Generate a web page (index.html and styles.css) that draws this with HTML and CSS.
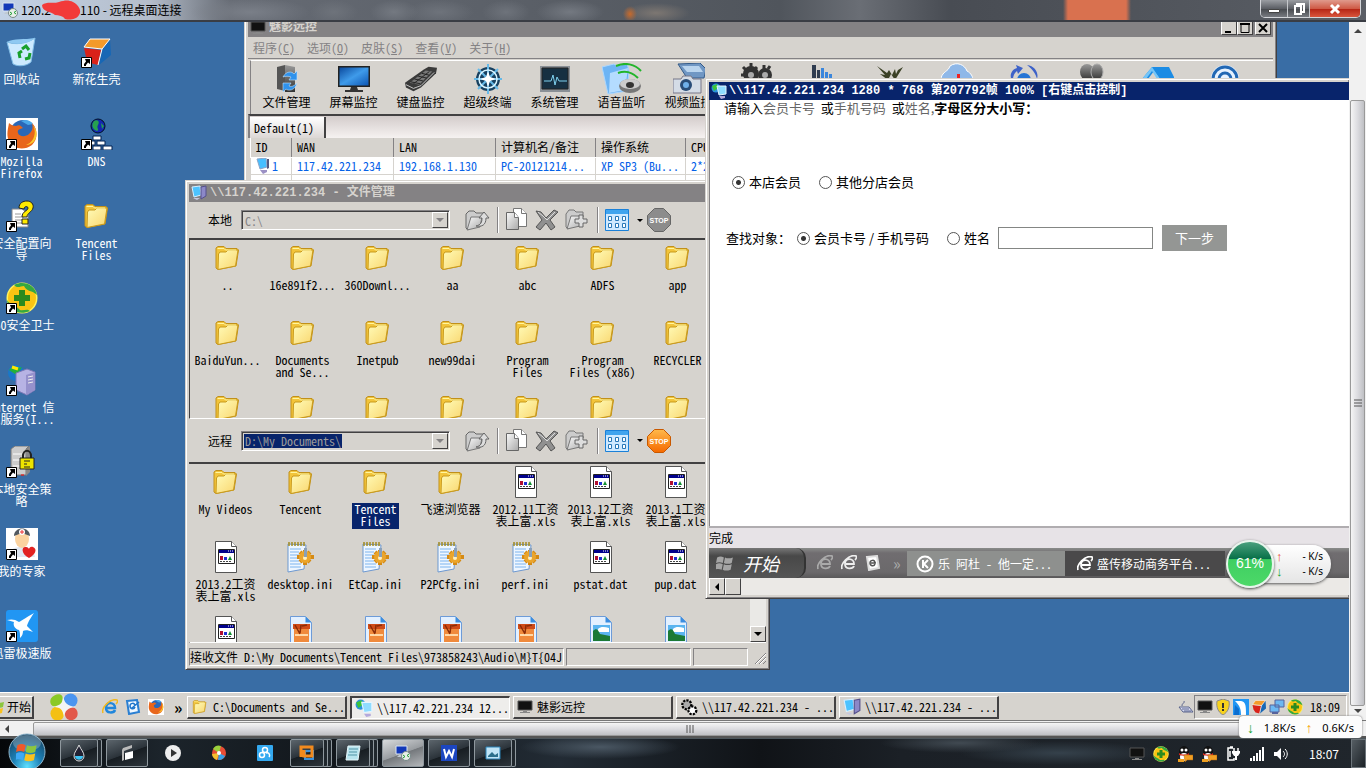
FILE: index.html
```html
<!DOCTYPE html>
<html lang="zh-CN">
<head>
<meta charset="utf-8">
<title>远程桌面连接</title>
<link rel="stylesheet" href="styles.css">
</head>
<body>
<svg class="sprite" width="0" height="0" aria-hidden="true">
  <defs>
    <linearGradient id="gFold" x1="0" y1="0" x2="1" y2="1"><stop offset="0" stop-color="#fffbb8"/><stop offset="1" stop-color="#f9d66e"/></linearGradient>
    <linearGradient id="gScreen" x1="0" y1="0" x2="1" y2="1"><stop offset="0" stop-color="#0b4a9e"/><stop offset=".5" stop-color="#3f9bea"/><stop offset="1" stop-color="#0d56b4"/></linearGradient>
    <linearGradient id="gGrey" x1="0" y1="0" x2="1" y2="1"><stop offset="0" stop-color="#fafafa"/><stop offset="1" stop-color="#a9a9a9"/></linearGradient>
    <linearGradient id="gDark" x1="0" y1="0" x2="0" y2="1"><stop offset="0" stop-color="#999"/><stop offset="1" stop-color="#333"/></linearGradient>
    <linearGradient id="gStop" x1="0" y1="0" x2="0" y2="1"><stop offset="0" stop-color="#ffb94a"/><stop offset="1" stop-color="#f56a00"/></linearGradient>
    <radialGradient id="gOrb" cx=".5" cy=".9" r=".9"><stop offset="0" stop-color="#5fe0ff"/><stop offset=".45" stop-color="#1c7fb5"/><stop offset="1" stop-color="#17425f"/></radialGradient>
  </defs>
  <symbol id="arrow" viewBox="0 0 32 32"><path d="M.5 21.500h10v10H.5z" fill="#fff" stroke="#000"/><path d="M4 23h5v5l-2-1.500-2 2.500v1H3v-2l2-2.500z"/></symbol>
  <symbol id="folder" viewBox="0 0 32 32"><path d="M4 6l2-1.500h6L14 6.500h11l1.500 1.500L24 24 6 27.500 4 26z" fill="#f2c43a" stroke="#c1901a"/><path d="M6.500 12L8 10h6l2-2h10L23.500 24 6 27.500z" fill="url(#gFold)" stroke="#c99a1c"/><path d="M5.500 6.500h6.500l1.500 1.500H24" stroke="#fff6a0" fill="none"/></symbol>
  <symbol id="xls" viewBox="0 0 32 32"><path d="M5.500.5h16l5 5v26h-21z" fill="#fff" stroke="#555"/><path d="M21.500.5v5h5" fill="#fff" stroke="#555"/><path d="M8.500 8.500h16v14h-16z" fill="#fff" stroke="#222"/><path d="M9 9h15v3H9z" fill="#00008c"/><path d="M18 10h1m1 0h1m1 0h1" stroke="#fff"/><path d="M10 15h3v4h-3z" fill="#b01030"/><path d="M14 16h3v3h-3z" fill="#2030d0"/><path d="M18 19l2-4 2 4z" fill="#109030"/><path d="M10 20.500h12" stroke="#444" stroke-dasharray="2 1"/></symbol>
  <symbol id="ini" viewBox="0 0 32 32"><path d="M3 3l18 1-2 24-16 3z" fill="#eef6ff" stroke="#6d98d0"/><path d="M5 8h11M5 11h9M5 14h9M5 17h8M5 20h9M5 23h11M5 26h11" stroke="#7db4ee"/><path d="M4 1v4m3-4v4m3-4v4m3-4v4m3-4v4m3-4v4" stroke="#a48c20" stroke-width="1.500"/><path d="M20 9v3m0 8v4m-8-8h3m10 0h4M15 11l2 2m6 6l2 2m0-10l-2 2m-6 6l-2 2" stroke="#d58a14" stroke-width="4"/><circle cx="20" cy="16" r="6" fill="#eba52c"/><circle cx="20" cy="17" r="2" fill="#fff0c0"/><path d="M19 7h3v9h-3z" fill="#8aa0b8"/></symbol>
  <symbol id="rar" viewBox="0 0 32 32"><path d="M5.500.5h15l6 6v25h-21z" fill="#e3f0ff" stroke="#6d9bd8"/><path d="M20.500.5v6h6z" fill="#3b8de0"/><path d="M8 8h17v5H8z" fill="#cf4b18"/><path d="M9 13h15v13H9z" fill="#f08a3c"/><path d="M10 19h13" stroke="#ffd9a8" stroke-width="2"/><path d="M10 9l5 9M16 9l-1 8M17 10l5-1" stroke="#8a2c08" stroke-width="1.500"/></symbol>
  <symbol id="pic" viewBox="0 0 32 32"><path d="M5.500.5h15l6 6v25h-21z" fill="#e3f0ff" stroke="#6d9bd8"/><path d="M20.500.5v6h6z" fill="#3b8de0"/><path d="M8 9h17v16H8z" fill="#5ab4f0"/><path d="M13 13c3-3 7-2 11-1v4H13z" fill="#fff"/><path d="M8 15c3-3 5-2 7 3l10 2v5H8z" fill="#1b7a36"/></symbol>

  <symbol id="recycle" viewBox="0 0 32 32"><path d="M1 6c8 3 19 2 28-4l-4 24c-4 4-13 5-18 2z" fill="#cdeaff" stroke="#7fbbe5"/><path d="M1 6C8 2 18 4 29 2c-6 6-18 7-28 4z" fill="#8fc9f2"/><path d="M16 13l4-3 3 4m1 3l-1 5-4 1m-5-1l-1-5 3-2" fill="none" stroke="#18a02c" stroke-width="3"/></symbol>
  <symbol id="cube" viewBox="0 0 32 32"><path d="M9 3h20l-8 10L3 11z" fill="#f39a2b"/><path d="M3 12l17 2-3 15-8-2-4-6z" fill="#d9221a"/><path d="M29 3l1 16-12 10 3-15z" fill="#1767b5"/><path d="M9 3h20l-8 10L3 11zm12 10l-4 16" fill="none" stroke="#fff"/></symbol>
  <symbol id="firefox" viewBox="0 0 32 32"><path d="M0 0h32v32H0z" fill="#fff"/><circle cx="17" cy="15" r="13" fill="#2a68b8"/><path d="M15 3c5-2 9-1 12 3l-5 1z" fill="#4ba7e8"/><path d="M3 5c2 2 4 3 7 3 4-2 5 0 7 2-4 1-6 2-5 5 1 4 8 4 11 1 4-3 4-8 3-11 6 6 6 16 0 22-8 6-19 4-23-4-3-6-1-12 0-18z" fill="#e8661b"/><path d="M27 7c4 8 1 17-7 20 10 0 14-12 7-20z" fill="#fbc92c"/></symbol>
  <symbol id="dns" viewBox="0 0 32 32"><circle cx="17" cy="8" r="7" fill="#1427b0" stroke="#012"/><path d="M13 3c4-2 6 1 4 4s2 5-1 6c-5-2-6-6-3-10zM20 5l3 3-2 3z" fill="#26a050"/><path d="M12 18h8v4h-8zM6 23h8v4H6zm10 0h8v4h-8zM12 28h8v4h-8zm10 0h9v4h-9z" fill="#fff" stroke="#012050"/></symbol>
  <symbol id="help" viewBox="0 0 32 32"><path d="M6 9h10l6 4v14H6z" fill="#fff" stroke="#888"/><path d="M9 14h6m-6 3h9m-9 3h9m-9 3h9" stroke="#999"/><path d="M13 8c0-5 4-7 8-7s7 3 6 7-6 5-6 9h-5c0-6 6-6 6-9 0-2-4-2-4 1zM16 19h6v5h-6z" fill="#ffea00" stroke="#222"/></symbol>
  <symbol id="s360" viewBox="0 0 32 32"><circle cx="16" cy="16" r="15.500" fill="#fff35c"/><circle cx="16" cy="16" r="14" fill="#f9c413"/><path d="M8 3c10-5 21 0 23 10-5-5-10-3-13-9-4 0-6 3-10-1zM24 29C13 34 2 28 1 18c4 6 10 6 13 10 4 1 7-2 10 1z" fill="#35a842"/><path d="M13 8h6v5h5v6h-5v5h-6v-5H8v-6h5z" fill="#2c8a1e"/></symbol>
  <symbol id="iis" viewBox="0 0 32 32"><circle cx="10" cy="9" r="8" fill="#1a78c8"/><path d="M3 6c6-6 6-1 13-3l-3 5 3 5-7-3z" fill="#23b03c"/><path d="M6 3l6 2" stroke="#ffe800" stroke-width="3"/><path d="M10 9l11-4 8 3v18l-8 5-11-5z" fill="#b7b3e4" stroke="#7b77b5"/><path d="M20 11l9-3v18l-9 5z" fill="#9691cc"/><path d="M22 13l5-1m-5 4l5-1m-5 4l5-1" stroke="#eee"/></symbol>
  <symbol id="secpol" viewBox="0 0 32 32"><path d="M5 3l4-3h14l-3 3v26H5z" fill="#ccc" stroke="#777"/><path d="M20 3l4-3v26l-4 4z" fill="#888"/><path d="M7 8h11M7 14h11M7 20h11" stroke="#fff"/><path d="M17 14v-4c0-7 8-7 8 0v4" fill="none" stroke="#222" stroke-width="2"/><path d="M14 12h14v11H14z" fill="#ece400" stroke="#222"/><path d="M18 15h6m-6 3h3m-3 3h6" stroke="#222"/><path d="M15 29h3" stroke="red"/></symbol>
  <symbol id="doctor" viewBox="0 0 32 32"><path d="M0 0h32v32H0z" fill="#fff"/><path d="M3 29c0-8 5-10 13-10s12 4 13 10z" fill="#e0e8f2"/><ellipse cx="16" cy="11" rx="7" ry="9" fill="#fbd3a0"/><path d="M8 8C8-2 24-2 24 8l-8-3z" fill="#525960"/><circle cx="16" cy="4" r="3" fill="#fff"/><path d="M14 4h4m-2-2v4" stroke="#e33"/><path d="M23 30c-9-5-7-12-3-11 2 0 3 2 3 2s1-3 4-2c5 2 2 8-4 11z" fill="#e22222"/></symbol>
  <symbol id="bird" viewBox="0 0 32 32"><rect width="32" height="32" rx="3" fill="#2196f3"/><path d="M1 10c4-1 8-1 12 2 4-2 8-5 15-9-4 6-6 9-7 13l6 6c-5-2-8-2-10-1 0 3-1 5-3 7 0-4 0-6-1-8-5-1-6-6-5-8z" fill="#fff"/></symbol>
  <symbol id="birdhead" viewBox="0 0 16 16"><path d="M0 0h16v16H0z" fill="#2196f3"/><path d="M2 2h6c5 1 5 5 5 14H8c0-6-1-9-6-14z" fill="#fff"/><path d="M2 6l4 4v6H1z" fill="#0d6fd0"/></symbol>

  <symbol id="tFile" viewBox="0 0 32 32"><path d="M6 4l8-2v26l-8-2z" fill="#555"/><path d="M14 2l10 2v25H14z" fill="url(#gDark)"/><path d="M12 14c3-6 9-6 11-3l3-3v9h-8l2-3c-3-1-5-1-8 0zm14 6c-2 8-9 8-11 6l-3 3v-9h8l-2 3c3 1 5 0 8-3z" fill="#2f92ec" stroke="#bfe2ff" stroke-width=".6"/></symbol>
  <symbol id="tScreen" viewBox="0 0 32 32"><path d="M0 3h32v21H0z" fill="#222"/><path d="M1.500 4.500h29v18h-29z" fill="url(#gScreen)"/><path d="M13 24h6l1 3h5v2H7v-2h5z" fill="#333"/></symbol>
  <symbol id="tKey" viewBox="0 0 34 32"><path d="M0 20L20 6l5-3 9 1-1 6-16 15-8 4-8-4z" fill="#3a3a3a"/><path d="M5 20L22 7l7 1-14 14z" fill="#777"/><path d="M6 19l10 2M10 16l9 2M14 13l9 2M18 10l8 2M9 21L26 8" stroke="#222"/><path d="M1 22l8 4 8-3L31 9" stroke="#ccc" fill="none"/></symbol>
  <symbol id="tTerm" viewBox="0 0 32 32"><circle cx="16" cy="16" r="12" fill="#174060"/><path d="M16 1v30M2 16h28M6 6l20 20M26 6L6 26" stroke="#66b9e8" stroke-width="2"/><circle cx="16" cy="16" r="9" fill="none" stroke="#d8f4ff" stroke-width="1.500"/><path d="M16 8l2 6 6 2-6 2-2 6-2-6-6-2 6-2z" fill="#fff"/></symbol>
  <symbol id="tSys" viewBox="0 0 32 32"><path d="M1 3h30v26H1z" fill="#8a9096"/><path d="M3 5h26v21H3z" fill="#163042" stroke="#222"/><path d="M5 18h7l2-6 2 10 2-8 2 4h8" stroke="#7fd0ee" fill="none"/></symbol>
  <symbol id="tVoice" viewBox="0 0 40 32"><path d="M0 4l12-3 3 2 10-3 2 8-2 20-19 3z" fill="#6db4f4" stroke="#a9d6ff"/><path d="M8 10l18-5-3 22-16 3z" fill="#b4dcff"/><path d="M14 3c9-4 19-2 25 5M16 10c8-3 14-1 20 5" fill="none" stroke="#22b52a" stroke-width="2"/><ellipse cx="28" cy="23" rx="11" ry="7" fill="#777"/><ellipse cx="28" cy="21" rx="10" ry="5" fill="#ccc"/><ellipse cx="28" cy="22" rx="4" ry="3" fill="#333"/></symbol>
  <symbol id="tVideo" viewBox="0 0 32 32"><path d="M5 1l22-1 6 6-2 9H14z" fill="#7097c4" stroke="#345a88"/><path d="M9 3h17l4 6H14z" fill="#b9d4ee"/><path d="M0 16h8l2-3h8l2 3h8v14H0z" fill="#d4dce6" stroke="#778"/><circle cx="13" cy="22" r="6" fill="#294d78"/><circle cx="13" cy="22" r="3" fill="#6fb0ea"/></symbol>
  <symbol id="tGear" viewBox="0 0 32 32"><g fill="#333"><circle cx="11" cy="11" r="8"/><circle cx="25" cy="12" r="7"/></g><g stroke="#333" stroke-width="3"><path d="M11 0v4M3 4l4 4M1 12h4m12-8l-3 3m10-5v4m6-3l-2 3"/></g><circle cx="11" cy="12" r="3" fill="#aaa"/><circle cx="25" cy="12" r="3" fill="#aaa"/></symbol>
  <symbol id="tBars" viewBox="0 0 32 32"><path d="M5 2h4v26H5zM10 7h3v20h-3z" fill="#2f3c50"/><path d="M14 5h3v22h-3zm4 4h3v18h-3zm4 2h3v16h-3z" fill="#3b86dc"/></symbol>
  <symbol id="tBug" viewBox="0 0 32 32"><path d="M3 3l8 9-5-1 8 6 3-6 4 6 8-13-5 3-2 4-1-5-3 6-3-5-2 3z" fill="#3b4126"/></symbol>
  <symbol id="tCloud" viewBox="0 0 32 32"><path d="M0 15C2 8 7 9 9 3c7-5 15-1 17 5 4 2 6 6 6 9H0z" fill="#8fb8e8" stroke="#fff"/><path d="M16 11h3v5h-3z" fill="#e22"/></symbol>
  <symbol id="tSync" viewBox="0 0 32 32"><circle cx="16" cy="17" r="7" fill="#2675d5"/><path d="M5 19C0 13 4 6 9 5L8 2l7 3-5 6-1-3c-4 3-4 7-4 11zM19 2c8 1 12 8 10 14-1-5-4-9-10-14z" fill="#3d62c8"/></symbol>
  <symbol id="tUsers" viewBox="0 0 32 32"><ellipse cx="12" cy="9" rx="7" ry="8" fill="url(#gDark)"/><ellipse cx="22" cy="9" rx="6" ry="8" fill="url(#gDark)" stroke="#aaa"/></symbol>
  <symbol id="tHouse" viewBox="0 0 32 32"><path d="M0 16L10 4h17l6 12H18l-6-8-6 8z" fill="#1c8ce4"/><path d="M0 16L10 4l8 12h-3L10 8l-6 8z" fill="#74c5f8"/></symbol>
  <symbol id="tAt" viewBox="0 0 32 32"><circle cx="16" cy="16" r="14" fill="#e6f2ff"/><circle cx="16" cy="16" r="12" fill="none" stroke="#2268b4" stroke-width="3"/><circle cx="16" cy="16" r="6" fill="none" stroke="#2268b4" stroke-width="3"/></symbol>

  <symbol id="pcs" viewBox="0 0 16 16"><path d="M1 2l8-1 1 9-7 2z" fill="#4cc3ff" stroke="#d6eeff"/><path d="M10 2l5-1v10l-5 3z" fill="#8c88c8" stroke="#55508c"/><path d="M2 13h7l-3 2z" fill="#c7c7e0"/></symbol>
  <symbol id="globepc" viewBox="0 0 16 16"><circle cx="5" cy="5" r="4.500" fill="#2a93dc"/><path d="M1 3l5-2 1 4-4 3z" fill="#3cc33c"/><path d="M6 3h9v8l-7 1z" fill="#8fdcff" stroke="#e5f5ff"/><path d="M8 13h6v2l-4 1z" fill="#b4a9dc"/></symbol>
  <symbol id="host" viewBox="0 0 14 16"><path d="M1 1l9-1 1 9-7 2z" fill="#47bfff" stroke="#8ca4c8"/><path d="M11 1h2v9l-2 1z" fill="#555a80"/><path d="M4 12h7v2l-4 2z" fill="#9b90c4"/></symbol>
  <symbol id="mon" viewBox="0 0 16 16"><path d="M1 2h14v9H1z" fill="#111" stroke="#555"/><path d="M6 12h4v1h3v1H3v-1h3z" fill="#888"/></symbol>

  <symbol id="up" viewBox="0 0 26 24"><path d="M2 6l3-3h5l2 2h8v3L4 22l-2-2z" fill="#ccc" stroke="#666"/><path d="M7 9h11l-2 10-13 3z" fill="url(#gGrey)" stroke="#777"/><path d="M12 18c5-1 6-4 6-8h-3l5-6 5 6h-3c0 7-4 9-10 8z" fill="#ddd" stroke="#666"/></symbol>
  <symbol id="copy" viewBox="0 0 26 24"><path d="M9.500.5h8l5 5v13h-13z" fill="#fff" stroke="#777"/><path d="M2.500 4.500h8l4 5v12h-12z" fill="url(#gGrey)" stroke="#666"/><path d="M10.500 4.500v5h4M17.500.5v5h5" fill="#fff" stroke="#777"/></symbol>
  <symbol id="del" viewBox="0 0 26 24"><path d="M2 3l5 1 5 6 8-8 4 2-8 8 5 7-4 3-5-7-6 7-4-3 6-7z" fill="#909090" stroke="#555"/><path d="M4 4l5 4 4 4 8-8" stroke="#ddd" fill="none"/></symbol>
  <symbol id="newf" viewBox="0 0 26 24"><path d="M2 6l3-4h5l2 2h7v5L4 21l-2-2z" fill="#ccc" stroke="#777"/><path d="M7 8h12l-3 10-13 3z" fill="url(#gGrey)" stroke="#777"/><path d="M15 7h4v4h4v4h-4v4h-4v-4h-4v-4h4z" fill="#ddd" stroke="#666"/></symbol>
  <symbol id="view" viewBox="0 0 26 24"><path d="M1.500 1.500h23v21h-23z" fill="#cfe9ff" stroke="#1a80d8"/><path d="M2 2h22v4H2z" fill="#40a4ee"/><path d="M4.500 8.500h3v4h-3zm7 0h3v4h-3zm7 0h3v4h-3zm-14 7h3v4h-3zm7 0h3v4h-3zm7 0h3v4h-3z" fill="#fff" stroke="#2878b8"/></symbol>
  <symbol id="stop" viewBox="0 0 24 24"><path d="M7.500.5h9l7 7v9l-7 7h-9l-7-7v-9z"/></symbol>

  <symbol id="ie" viewBox="0 0 16 16"><path d="M13 11c-1 3-9 4-9-2 0-7 9-6 9 0H5" fill="none" stroke="#2187dc" stroke-width="2.500"/><path d="M1 14C-1 9 8-1 15 1c1 1 0 3-1 4" fill="none" stroke="#f2b820" stroke-width="1.500"/></symbol>
  <symbol id="ieg" viewBox="0 0 16 16"><path d="M13 11c-1 3-9 4-9-2 0-7 9-6 9 0H5M1 14C-1 9 8-1 15 1c1 1 0 3-1 4" fill="none" stroke="currentColor" stroke-width="1.800"/></symbol>
  <symbol id="note" viewBox="0 0 16 16"><path d="M2 2l10-1 2 12-10 2z" fill="#f0f8ff" stroke="#2a7fd2" stroke-width="2"/><path d="M10 7c0-4-5-3-5 0s4 4 5 1M7 9l7-6" fill="none" stroke="#1e76cc" stroke-width="1.500"/></symbol>
  <symbol id="noteg" viewBox="0 0 16 16"><path d="M2 2l10-1 2 12-10 2z" fill="#fff" stroke="#ddd" stroke-width="2"/><path d="M10 8c0-4-5-3-5 0s4 4 5 1M6 8h5" fill="none" stroke="#555" stroke-width="1.500"/></symbol>
  <symbol id="flower" viewBox="0 0 30 30"><path d="M1 6c4-6 14-7 13 2v7H7C1 15-1 10 1 6z" fill="#8ac926"/><circle cx="22" cy="8" r="7.500" fill="#4b95f0"/><circle cx="8" cy="22" r="7.500" fill="#f4c014"/><path d="M16 15h8c8 2 7 13 0 14-8 1-9-6-8-14z" fill="#e2584a"/><path d="M14 2c-1 8 0 11-12 13 9 0 12 2 13 12 1-8 3-11 13-12-10-1-13-4-14-13z" fill="#f4f4f4"/></symbol>
  <symbol id="gears" viewBox="0 0 16 16"><circle cx="6" cy="6" r="4" fill="#aaa" stroke="#000" stroke-width="2" stroke-dasharray="2 1"/><circle cx="11" cy="11" r="3.500" fill="#fff" stroke="#000" stroke-width="2" stroke-dasharray="2 1"/></symbol>
  <symbol id="kbd" viewBox="0 0 16 16"><path d="M1 8h10l4 5H5z" fill="#d8dcf4" stroke="#5a648c"/><path d="M4 10h7m-5 2h7M4 7c0-4 3-2 2-5" stroke="#5a648c" fill="none"/></symbol>
  <symbol id="shield" viewBox="0 0 16 16"><path d="M8 0l6 2c1 6-1 11-6 14C3 13 1 8 2 2z" fill="#f7d21c" stroke="#8a8a8a"/><path d="M7 4h2v5H7zm0 6h2v2H7z" fill="#333"/></symbol>
  <symbol id="net" viewBox="0 0 16 16"><path d="M6 1h9v7H6zM1 6h9v7H1z" fill="#6cb8f2" stroke="#56639c"/><path d="M3 14h6" stroke="#56639c" stroke-width="2"/></symbol>
  <symbol id="winlogo" viewBox="0 0 16 16"><path d="M1 3c2-1 4-1 6 0L6 8C4 7 2 7 0 8z" fill="#f0592a"/><path d="M8 3c2 1 4 1 7 0l-1 5c-2 1-5 1-7 0z" fill="#8cc63e"/><path d="M0 9c2-1 4-1 6 0l-1 5c-2-1-4-1-6 0z" fill="#3fa9f5"/><path d="M7 9c2 1 4 1 7 0l-1 5c-3 1-5 1-7 0z" fill="#fbc21d"/></symbol>
  <symbol id="wingrey" viewBox="0 0 16 16"><path d="M1 3c2-1 4-1 6 0L6 8C4 7 2 7 0 8zM8 3c2 1 4 1 7 0l-1 5c-2 1-5 1-7 0zM0 9c2-1 4-1 6 0l-1 5c-2-1-4-1-6 0zM7 9c2 1 4 1 7 0l-1 5c-3 1-5 1-7 0z" fill="#a5a5a5"/></symbol>
  <symbol id="rdp" viewBox="0 0 16 16"><path d="M1 1h11v8H1z" fill="#1238b8" stroke="#dde6f0"/><path d="M4 10h5v2H2z" fill="#c0c8d0"/><circle cx="11" cy="11" r="4.500" fill="#e8efe8" stroke="#788"/><path d="M8 10l2 1.500L8 13m6-4l-2 1.500 2 1.500" stroke="#1c9a30" fill="none"/></symbol>
  <symbol id="qq" viewBox="0 0 16 16"><ellipse cx="7" cy="6" rx="5" ry="6" fill="#111"/><circle cx="5" cy="4" r="1.500" fill="#fff"/><circle cx="9" cy="4" r="1.500" fill="#fff"/><ellipse cx="7" cy="11" rx="4" ry="4" fill="#fff"/><path d="M2 7c3 2 7 2 10 0v2c-3 1-7 1-10 0z" fill="#d8281c"/><path d="M7 9h9v5h-6l-2 2z" fill="#f2a024" stroke="#a8600c" stroke-width=".5"/><path d="M1 13h6v3H1z" fill="#f0a020"/></symbol>
</svg>

<div class="screen">
  <header class="rdpbar">
    <h1 class="rdptitle"><svg class="i16"><use href="#rdp"/></svg><span>120.2</span><svg class="scribble" viewBox="0 0 40 20"><path d="M1 5C6 1 12 4 18 2s10-2 14 0c6 3 9 9 6 13-3 5-10 5-14 4-2-3-6-4-10-4C10 11 1 12 1 5z" fill="#f23a3a"/></svg><span>110 - 远程桌面连接</span></h1>
    <div class="winbtns">
      <button aria-label="最小化"><svg width="14" height="10"><path d="M1.500 5.500h11v3h-11z" fill="#fff" stroke="#444"/></svg></button>
      <button aria-label="还原"><svg width="12" height="12" fill="none" stroke="#fff" stroke-width="2"><path d="M4 3V1h7v8H8M2 3h6v8H2z"/></svg></button>
      <button class="close" aria-label="关闭"><svg width="12" height="10"><path d="M2 1l8 8m0-8L2 9" stroke="#fff" stroke-width="3"/></svg></button>
    </div>
  </header>

  <main class="session">
    <section class="desktop">
      <ul class="icons">
        <li><svg class="i32"><use href="#recycle"/></svg><span>回收站</span></li>
        <li><svg class="i32"><use href="#cube"/><use href="#arrow"/></svg><span>新花生壳</span></li>
        <li><svg class="i32"><use href="#firefox"/><use href="#arrow"/></svg><span>Mozilla<br>Firefox</span></li>
        <li><svg class="i32"><use href="#dns"/><use href="#arrow"/></svg><span>DNS</span></li>
        <li><svg class="i32"><use href="#help"/><use href="#arrow"/></svg><span>安全配置向<br>导</span></li>
        <li><svg class="i32"><use href="#folder"/></svg><span>Tencent<br>Files</span></li>
        <li class="row-start"><svg class="i32"><use href="#s360"/><use href="#arrow"/></svg><span>360安全卫士</span></li>
        <li class="row-start"><svg class="i32"><use href="#iis"/><use href="#arrow"/></svg><span>Internet 信<br>息服务(I...</span></li>
        <li class="row-start"><svg class="i32"><use href="#secpol"/><use href="#arrow"/></svg><span>本地安全策<br>略</span></li>
        <li class="row-start"><svg class="i32"><use href="#doctor"/><use href="#arrow"/></svg><span>我的专家</span></li>
        <li class="row-start"><svg class="i32"><use href="#bird"/><use href="#arrow"/></svg><span>迅雷极速版</span></li>
      </ul>

      <section class="win win-main">
        <div class="caption"><svg class="i16"><use href="#mon"/></svg><h2>魅影远控</h2>
          <div class="capbtns"><button aria-label="最小化"><svg width="10" height="10"><path d="M1 8h6v2H1z"/></svg></button><button aria-label="最大化"><svg width="10" height="10"><path d="M1 1.500h8v8H1z" fill="none" stroke="#000"/><path d="M0 1h10" stroke="#000" stroke-width="2"/></svg></button><button aria-label="关闭"><svg width="10" height="10"><path d="M1 1l8 8m0-8L1 9" stroke="#000" stroke-width="2"/></svg></button></div>
        </div>
        <nav class="menu"><a href="#">程序(<u>C</u>)</a><a href="#">选项(<u>O</u>)</a><a href="#">皮肤(<u>S</u>)</a><a href="#">查看(<u>V</u>)</a><a href="#">关于(<u>H</u>)</a></nav>
        <div class="tools">
          <button><svg class="i32"><use href="#tFile"/></svg>文件管理</button>
          <button><svg class="i32"><use href="#tScreen"/></svg>屏幕监控</button>
          <button><svg class="i32"><use href="#tKey"/></svg>键盘监控</button>
          <button><svg class="i32"><use href="#tTerm"/></svg>超级终端</button>
          <button><svg class="i32"><use href="#tSys"/></svg>系统管理</button>
          <button><svg class="i32 wide"><use href="#tVoice"/></svg>语音监听</button>
          <button><svg class="i32"><use href="#tVideo"/></svg>视频监控</button>
          <button aria-label="设置"><svg class="i32"><use href="#tGear"/></svg></button>
          <button aria-label="统计"><svg class="i32"><use href="#tBars"/></svg></button>
          <button aria-label="攻击"><svg class="i32"><use href="#tBug"/></svg></button>
          <button aria-label="云"><svg class="i32"><use href="#tCloud"/></svg></button>
          <button aria-label="更新"><svg class="i32"><use href="#tSync"/></svg></button>
          <button aria-label="用户"><svg class="i32"><use href="#tUsers"/></svg></button>
          <button aria-label="主页"><svg class="i32"><use href="#tHouse"/></svg></button>
          <button aria-label="网络"><svg class="i32"><use href="#tAt"/></svg></button>
        </div>
        <div class="tabs"><button>Default(1)</button></div>
        <table class="hosts">
          <colgroup><col class="c-id"><col class="c-ip"><col class="c-ip"><col class="c-name"><col class="c-os"><col></colgroup>
          <thead><tr><th>ID</th><th>WAN</th><th>LAN</th><th>计算机名/备注</th><th>操作系统</th><th>CPU</th></tr></thead>
          <tbody><tr><td><div class="hostid"><svg class="host"><use href="#host"/></svg>1</div></td><td>117.42.221.234</td><td>192.168.1.130</td><td>PC-20121214...</td><td>XP SP3 (Bu...</td><td>2*2</td></tr>
          <tr><td></td><td></td><td></td><td></td><td></td><td></td></tr></tbody>
        </table>
      </section>

      <section class="win win-files">
        <div class="caption"><svg class="i16"><use href="#pcs"/></svg><h2>\\117.42.221.234 - 文件管理</h2></div>
        <div class="pathbar">
          <label for="local">本地</label>
          <div class="combo"><input id="local" value="C:\"><button aria-label="展开"><i class="tri"></i></button></div>
          <button aria-label="上级"><svg class="tb"><use href="#up"/></svg></button><hr>
          <button aria-label="复制"><svg class="tb"><use href="#copy"/></svg></button><button aria-label="删除"><svg class="tb"><use href="#del"/></svg></button><button aria-label="新建"><svg class="tb"><use href="#newf"/></svg></button><hr>
          <button aria-label="视图" class="viewbtn"><svg class="tb"><use href="#view"/></svg><i class="tri small"></i></button>
          <button aria-label="停止"><svg class="stopicon off" viewBox="0 0 24 24"><use href="#stop"/><text x="12" y="15">STOP</text></svg></button>
        </div>
        <ul class="files local">
          <li><svg class="i32"><use href="#folder"/></svg><span>..</span></li>
          <li><svg class="i32"><use href="#folder"/></svg><span>16e891f2...</span></li>
          <li><svg class="i32"><use href="#folder"/></svg><span>360Downl...</span></li>
          <li><svg class="i32"><use href="#folder"/></svg><span>aa</span></li>
          <li><svg class="i32"><use href="#folder"/></svg><span>abc</span></li>
          <li><svg class="i32"><use href="#folder"/></svg><span>ADFS</span></li>
          <li><svg class="i32"><use href="#folder"/></svg><span>app</span></li>
          <li><svg class="i32"><use href="#folder"/></svg><span>BaiduYun...</span></li>
          <li><svg class="i32"><use href="#folder"/></svg><span>Documents<br>and Se...</span></li>
          <li><svg class="i32"><use href="#folder"/></svg><span>Inetpub</span></li>
          <li><svg class="i32"><use href="#folder"/></svg><span>new99dai</span></li>
          <li><svg class="i32"><use href="#folder"/></svg><span>Program<br>Files</span></li>
          <li><svg class="i32"><use href="#folder"/></svg><span>Program<br>Files (x86)</span></li>
          <li><svg class="i32"><use href="#folder"/></svg><span>RECYCLER</span></li>
          <li><svg class="i32"><use href="#folder"/></svg></li>
          <li><svg class="i32"><use href="#folder"/></svg></li>
          <li><svg class="i32"><use href="#folder"/></svg></li>
          <li><svg class="i32"><use href="#folder"/></svg></li>
          <li><svg class="i32"><use href="#folder"/></svg></li>
          <li><svg class="i32"><use href="#folder"/></svg></li>
          <li><svg class="i32"><use href="#folder"/></svg></li>
        </ul>
        <div class="pathbar remote">
          <label for="remote">远程</label>
          <div class="combo"><input id="remote" class="picked" value="D:\My Documents\"><button aria-label="展开"><i class="tri"></i></button></div>
          <button aria-label="上级"><svg class="tb"><use href="#up"/></svg></button><hr>
          <button aria-label="复制"><svg class="tb"><use href="#copy"/></svg></button><button aria-label="删除"><svg class="tb"><use href="#del"/></svg></button><button aria-label="新建"><svg class="tb"><use href="#newf"/></svg></button><hr>
          <button aria-label="视图" class="viewbtn"><svg class="tb"><use href="#view"/></svg><i class="tri small"></i></button>
          <button aria-label="停止"><svg class="stopicon" viewBox="0 0 24 24"><use href="#stop"/><text x="12" y="15">STOP</text></svg></button>
        </div>
        <div class="remotebox">
          <ul class="files">
            <li><svg class="i32"><use href="#folder"/></svg><span>My Videos</span></li>
            <li><svg class="i32"><use href="#folder"/></svg><span>Tencent</span></li>
            <li><svg class="i32"><use href="#folder"/></svg><span class="sel">Tencent<br>Files</span></li>
            <li><svg class="i32"><use href="#folder"/></svg><span>飞速浏览器</span></li>
            <li><svg class="i32"><use href="#xls"/></svg><span>2012.11工资<br>表上富.xls</span></li>
            <li><svg class="i32"><use href="#xls"/></svg><span>2013.12工资<br>表上富.xls</span></li>
            <li><svg class="i32"><use href="#xls"/></svg><span>2013.1工资<br>表上富.xls</span></li>
            <li><svg class="i32"><use href="#xls"/></svg><span>2013.2工资<br>表上富.xls</span></li>
            <li><svg class="i32"><use href="#ini"/></svg><span>desktop.ini</span></li>
            <li><svg class="i32"><use href="#ini"/></svg><span>EtCap.ini</span></li>
            <li><svg class="i32"><use href="#ini"/></svg><span>P2PCfg.ini</span></li>
            <li><svg class="i32"><use href="#ini"/></svg><span>perf.ini</span></li>
            <li><svg class="i32"><use href="#xls"/></svg><span>pstat.dat</span></li>
            <li><svg class="i32"><use href="#xls"/></svg><span>pup.dat</span></li>
            <li><svg class="i32"><use href="#xls"/></svg></li>
            <li><svg class="i32"><use href="#rar"/></svg></li>
            <li><svg class="i32"><use href="#rar"/></svg></li>
            <li><svg class="i32"><use href="#rar"/></svg></li>
            <li><svg class="i32"><use href="#rar"/></svg></li>
            <li><svg class="i32"><use href="#pic"/></svg></li>
            <li><svg class="i32"><use href="#pic"/></svg></li>
          </ul>
          <div class="vbar"><button aria-label="向下"><i class="tri dark"></i></button></div>
        </div>
        <div class="statusbar"><p>接收文件 D:\My Documents\Tencent Files\973858243\Audio\M}T{04J</p><p></p><p></p><svg width="12" height="14"><path d="M1 13L12 2M5 13l7-7M9 13l3-3" stroke="#848284"/><path d="M2 13L12 3M6 13l6-6" stroke="#fff"/></svg></div>
      </section>

      <section class="win win-view">
        <div class="caption active"><svg class="i16"><use href="#globepc"/></svg><h2>\\117.42.221.234 1280 * 768 第207792帧 100% [右键点击控制]</h2></div>
        <form class="page" onsubmit="return false">
          <p class="hint">请输入<em>会员卡号</em>&nbsp; 或<em>手机号码</em>&nbsp; 或<em>姓名,</em><b>字母区分大小写：</b></p>
          <div class="line shop"><label><input type="radio" name="shop" checked>本店会员</label><label><input type="radio" name="shop">其他分店会员</label></div>
          <div class="line find"><span class="lead">查找对象：</span><label><input type="radio" name="by" checked>会员卡号 / 手机号码</label><label><input type="radio" name="by">姓名</label><input type="text" class="query" aria-label="查找对象"><button class="next">下一步</button></div>
        </form>
        <div class="iestatus">完成</div>
        <div class="xpbar">
          <button class="xpstart"><svg class="i18"><use href="#wingrey"/></svg>开始</button>
          <div class="xpquick"><svg class="i16"><use href="#ieg"/></svg><svg class="i16 lit"><use href="#ieg"/></svg><svg class="i16"><use href="#noteg"/></svg><span>»</span></div>
          <button class="xptask"><svg class="i18" viewBox="0 0 18 18" fill="none" stroke="#fff" stroke-width="2"><circle cx="9" cy="9" r="7.500"/><path d="M7 5v8m5-8L8 9l4 4"/></svg>乐 阿杜 - 他一定...</button>
          <button class="xptask down"><svg class="i16"><use href="#ieg"/></svg>盛传移动商务平台...</button>
        </div>
        <div class="hbar"><button aria-label="向左"><svg width="6" height="8"><path d="M5 0v8L1 4z"/></svg></button><span></span></div>
      </section>

      <aside class="meter">
        <div class="speeds"><p><b class="red">↑</b><span>- K/s</span></p><p><b class="green">↓</b><span>- K/s</span></p></div>
        <div class="ball">61%</div>
      </aside>

      <footer class="taskbar2003">
        <button class="start"><svg class="i16"><use href="#winlogo"/></svg>开始</button>
        <svg class="flower"><use href="#flower"/></svg>
        <div class="quick"><svg class="i16"><use href="#ie"/></svg><svg class="i16"><use href="#note"/></svg><svg class="i16"><use href="#firefox"/></svg><b>»</b></div>
        <div class="tasks">
          <button><svg class="i18"><use href="#folder"/></svg>C:\Documents and Se...</button>
          <button class="down"><svg class="i18"><use href="#globepc"/></svg>\\117.42.221.234 12...</button>
          <button><svg class="i16"><use href="#mon"/></svg>魅影远控</button>
          <button><svg class="i18"><use href="#gears"/></svg>\\117.42.221.234 - ...</button>
          <button><svg class="i18"><use href="#pcs"/></svg>\\117.42.221.234 - ...</button>
        </div>
        <svg class="i16"><use href="#kbd"/></svg>
        <div class="tray"><svg class="i16"><use href="#mon"/></svg><svg class="i16"><use href="#shield"/></svg><svg class="i16"><use href="#birdhead"/></svg><svg class="i16"><use href="#cube"/></svg><svg class="i16"><use href="#net"/></svg><svg class="i16"><use href="#s360"/></svg><time>18:09</time></div>
      </footer>
    </section>
    <div class="vscroll"><i class="tri-up"></i><div class="thumb"><svg width="8" height="8"><path d="M0 1h8M0 4h8M0 7h8" stroke="#555"/></svg></div><i class="tri thin"></i></div>
    <div class="hscroll"><i class="tri-left"></i><div class="thumb"><svg width="8" height="8"><path d="M1 0v8M4 0v8M7 0v8" stroke="#555"/></svg></div></div>
    <aside class="netpop"><b class="green">↓</b><span>1.8K/s</span><b class="amber">↑</b><span>0.6K/s</span></aside>
  </main>

  <footer class="taskbar7">
    <svg class="orb" viewBox="0 0 38 38"><circle cx="19" cy="19" r="18" fill="url(#gOrb)" stroke="#8fb5cc"/><ellipse cx="19" cy="10" rx="14" ry="8" fill="#fff" opacity=".25"/><svg x="8" y="8" width="22" height="22"><use href="#winlogo"/></svg></svg>
    <div class="apps">
      <button class="multi" aria-label="水滴"><svg width="16" height="18"><path d="M8 1c2 5 5 7 5 11a5 5 0 0 1-10 0c0-4 3-6 5-11z" fill="#223" stroke="#ddd"/><path d="M4 12h8c0 5-8 5-8 0z" fill="#3dc4f4"/></svg></button>
      <button aria-label="文件"><svg width="16" height="18"><path d="M4 4l9-3v3L5 7v9l-2 1V6z" fill="#bbb"/><path d="M6 9l8-2v7l-8 2z" fill="#fff"/></svg></button>
      <button class="plain" aria-label="播放"><svg width="16" height="16"><circle cx="8" cy="8" r="8" fill="#eee"/><path d="M6 4l6 4-6 4z" fill="#333"/></svg></button>
      <button class="plain" aria-label="相册"><svg width="14" height="14"><circle cx="7" cy="7" r="7" fill="#e94d35"/><path d="M7 7L1 3a7 7 0 0 1 8-3z" fill="#9bd13c"/><path d="M7 7L0 8a7 7 0 0 0 5 6z" fill="#f5c030"/><path d="M7 7l-1 7a7 7 0 0 0 7-4z" fill="#37a1e8"/><circle cx="7" cy="7" r="2" fill="#fff"/></svg></button>
      <button class="plain" aria-label="音乐"><svg width="16" height="16"><rect width="16" height="16" rx="1" fill="#34a9f0"/><g fill="none" stroke="#fff" stroke-width="1.500"><circle cx="5" cy="10" r="2.500"/><circle cx="8" cy="5" r="2.500"/><path d="M9 8c4-1 4 3 3 4"/></g></svg></button>
      <button class="stack" aria-label="虚拟机"><svg width="16" height="16"><path d="M6 6h8v8H6z" fill="none" stroke="#3a90dc" stroke-width="2"/><path d="M2 12V2h11v9H5V5" fill="none" stroke="#f28a1e" stroke-width="3"/></svg></button>
      <button class="stack" aria-label="记事本"><svg width="16" height="16"><path d="M3 1h12l-2 14H1z" fill="#b8e4ee" stroke="#e6f6fa"/><path d="M4 4h9M4 7h8M3 10h9" stroke="#4e93a5"/></svg></button>
      <button class="lit" aria-label="远程桌面"><svg class="i16"><use href="#rdp"/></svg></button>
      <button aria-label="文档"><svg width="16" height="16"><path d="M0 0h16v16H0z" fill="#1c46c0"/><path d="M3 4l2 8 3-6 3 6 2-8" fill="none" stroke="#fff" stroke-width="2"/></svg></button>
      <button class="multi" aria-label="图片"><svg width="16" height="16"><path d="M1 2h14v12H1z" fill="#bfe4f6" stroke="#2b83b8"/><path d="M3 11l4-4 3 3 3-2v4H3z" fill="#2a6f8c"/></svg></button>
    </div>
    <div class="tray7"><svg class="i16"><use href="#mon"/></svg><svg class="i16"><use href="#s360"/></svg><svg class="i16"><use href="#qq"/></svg><svg class="i16"><use href="#qq"/></svg>
      <svg class="i16"><path d="M8 2H3v12h6v-2M5 1h3M5 5v6" fill="none" stroke="#fff" stroke-width="1.500"/><path d="M9 2v3m4-3v3" stroke="#fff" stroke-width="1.500"/><path d="M7 5h8v2l-2 3h-1v4h-2v-4H9L7 7z" fill="#fff"/></svg>
      <svg class="i16"><path d="M1 12h2v3H1zm3-2h2v5H4zm3-3h2v8H7zm3-3h2v11h-2zm3-3h2v14h-2z" fill="#fff"/></svg>
      <svg class="i16"><path d="M1 6h3l4-4v12l-4-4H1z" fill="#fff"/><path d="M10 5c2 2 2 4 0 6m2-8c3 3 3 7 0 10" fill="none" stroke="#fff"/></svg>
      <time>18:07</time></div>
    <button class="peek" aria-label="显示桌面"></button>
  </footer>
</div>
</body>
</html>
```
FILE: styles.css
```css
* { box-sizing: border-box; }
html, body { margin: 0; height: 100%; }
body {
  font: 12px/12px "Noto Sans CJK SC", sans-serif;
  font-feature-settings: "hwid";
  color: #000;
  overflow: hidden;
}
h1, h2, p, ul, hr { margin: 0; padding: 0; }
ul { list-style: none; }
button { font: inherit; font-feature-settings: inherit; color: inherit; background: none; border: 0; padding: 0; white-space: nowrap; }
input { font: inherit; font-feature-settings: inherit; }
svg { flex: none; display: block; overflow: visible; }
em { font-style: normal; color: #666; }
.sprite { position: absolute; }
.i16 { width: 16px; height: 16px; }
.i18 { width: 18px; height: 18px; }
.i32 { width: 32px; height: 32px; }
.i32.wide { width: 40px; }

.tri, .tri-up, .tri-left { width: 0; height: 0; border: 4px solid transparent; }
.tri { border-top-color: #848284; border-bottom: 0; }
.tri.small { border-width: 3px 3px 0; border-top-color: #000; }
.tri.dark { border-top-color: #000; }
.tri.thin { border-top-color: #444; }
.tri-up { border-bottom-color: #444; border-top: 0; }
.tri-left { border-right-color: #444; border-left: 0; }
.green { color: #12a32c; }
.red { color: #e8452c; }
.amber { color: #f5a50a; }

.screen { height: 100vh; display: flex; flex-direction: column; background: #10151b; }

/* Aero title bar */
.rdpbar {
  height: 22px; flex: none; display: flex; justify-content: space-between; align-items: flex-start;
  border-bottom: 2px solid #3a3d44;
  background:
    radial-gradient(ellipse 60px 14px at 250px 12px, #7a7f88, transparent),
    radial-gradient(ellipse 24px 12px at 334px 12px, #6e737b, transparent),
    radial-gradient(ellipse 24px 12px at 394px 12px, #747981, transparent),
    radial-gradient(ellipse 34px 12px at 440px 12px, #6e737b, transparent),
    radial-gradient(ellipse 24px 12px at 506px 12px, #6e737b, transparent),
    radial-gradient(ellipse 34px 12px at 570px 12px, #747981, transparent),
    radial-gradient(ellipse 7px 8px at 630px 14px, #c66a2c, transparent),
    radial-gradient(ellipse 34px 10px at 656px 13px, #7d7772, transparent),
    linear-gradient(90deg, transparent 1063px, #d9714f 1068px, #d9714f 1126px, transparent 1131px),
    linear-gradient(90deg, #c3d2e6 0, #b4bdca 150px, #666b74 230px, #50555c 780px, #6a6e75 860px, #484c53 950px, #5a5e65);
}
.rdptitle { display: flex; align-items: center; height: 20px; padding-left: 2px; font-size: 12px; font-weight: 400; font-feature-settings: normal; }
.rdptitle .i16 { margin-right: 3px; }
.scribble { width: 40px; height: 20px; margin: 0 -1px 0 -10px; z-index: 1; }
.winbtns { display: flex; margin-right: 5px; border: 1px solid #d4d6da; border-top: 0; border-radius: 0 0 5px 5px; overflow: hidden; }
.winbtns button { width: 22px; height: 17px; display: grid; place-items: center; border-left: 1px solid #c5c7cb; background: linear-gradient(#9a9da2, #5c5f65 50%, #44474c 51%, #777a80); }
.winbtns button:first-child { width: 26px; border-left: 0; }
.winbtns .close { width: 51px; background: linear-gradient(#e09a8c, #cf5b46 50%, #b32313 51%, #d9553c); }

.session { flex: 1; min-height: 0; display: grid; grid-template: minmax(0, 1fr) 18px / minmax(0, 1fr) 17px; position: relative; }
.desktop { position: relative; overflow: hidden; background: #396da5; display: flex; flex-direction: column; justify-content: space-between; }

.icons { display: grid; grid-template-columns: 75px 75px; grid-auto-rows: 82px; margin-left: -16px; padding-top: 14px; color: #fff; }
.icons li, .files li { display: flex; flex-direction: column; align-items: center; gap: 5px; }
.icons span, .files span { text-align: center; white-space: nowrap; }
.icons .row-start { grid-column: 1; }

/* Classic windows */
.win { position: absolute; display: flex; flex-direction: column; background: #d6d3ce; border: 1px solid #d6d3ce; border-right-color: #424142; border-bottom-color: #424142; box-shadow: inset 1px 1px #fff, inset -1px -1px #848284; padding: 3px; }
.caption { display: flex; align-items: center; gap: 3px; height: 18px; flex: none; padding: 0 2px; background: #848284; color: #d6d3ce; }
.caption.active { gap: 2px; background: #08246b; color: #fff; }
.caption h2 { font: bold 12px/18px "Liberation Mono", "Noto Sans CJK SC", monospace; font-feature-settings: normal; white-space: nowrap; }

.win-main { left: 244px; top: -7px; width: 1033px; height: 500px; }
.capbtns { display: flex; margin-left: auto; }
.capbtns button { width: 16px; height: 14px; display: grid; place-items: center; background: #d6d3ce; border: 1px solid #fff; border-right-color: #424142; border-bottom-color: #424142; }
.capbtns button:last-child { margin-left: 2px; }
.menu { display: flex; gap: 12px; height: 22px; align-items: center; padding-left: 5px; border-bottom: 1px solid #848284; }
.menu a { color: #848284; text-decoration: none; }
.tools { display: flex; height: 54px; flex: none; margin: 1px 0 0 2px; padding: 2px 0 0 2px; border-left: 1px solid #848284; border-top: 1px solid #fff; overflow: hidden; }
.tools button { width: 67px; flex: none; display: flex; flex-direction: column; align-items: center; line-height: 14px; }
.tabs { height: 24px; flex: none; border-top: 2px solid #424142; background: linear-gradient(#d3cccb, #f6f2f1); border-left: 2px solid #848284; }
.tabs button { height: 21px; margin-top: 1px; padding: 0 10px 0 4px; border-right: 2px solid #424142; background: linear-gradient(#fff, #dcd7d5); }
.hosts { width: 100%; table-layout: fixed; border-collapse: collapse; background: #fff; color: #0561e8; margin-left: 2px; }
.hosts th { text-align: left; font-weight: 400; height: 19px; color: #000; background: #d6d3ce; padding: 0 5px; border-right: 1px solid #848284; border-bottom: 1px solid #fff; }
.hosts td { height: 17px; padding: 0 5px; border: 1px solid #d6d3ce; white-space: nowrap; }
.hostid { display: flex; align-items: center; gap: 2px; }
.host { width: 14px; height: 16px; }
.c-id { width: 41px; } .c-ip { width: 102px; } .c-name { width: 100px; } .c-os { width: 90px; }

.win-files { left: 185px; top: 158px; width: 585px; height: 490px; }
.pathbar { display: flex; align-items: center; height: 36px; flex: none; padding-left: 19px; }
.pathbar.remote { height: 43px; }
.pathbar label { width: 33px; }
.pathbar > button { margin-right: 4px; }
.combo { display: flex; width: 209px; height: 20px; margin-right: 14px; padding: 1px; border: 1px solid #848284; border-right-color: #fff; border-bottom-color: #fff; box-shadow: inset 1px 1px #424142; background: #d6d3ce; justify-content: space-between; }
.combo input { width: 98px; height: 14px; margin: 1px; border: 0; padding: 0 1px; color: #848284; background: transparent; }
.combo .picked { background: #08246b; color: #9a9a9a; }
.combo button, .vbar button { width: 16px; height: 16px; display: grid; place-items: center; background: #d6d3ce; border: 1px solid #fff; border-right-color: #424142; border-bottom-color: #424142; }
.tb { width: 26px; height: 24px; }
.pathbar hr { width: 2px; height: 26px; border: 0; border-left: 1px solid #848284; border-right: 1px solid #fff; margin: 0 5px 0 3px; }
.viewbtn { display: flex; align-items: center; gap: 7px; }
.stopicon { width: 24px; height: 24px; fill: url(#gStop); stroke: #c85800; }
.stopicon.off { fill: #8c8c8c; stroke: #666; }
.stopicon text { font: bold 7px "Liberation Sans", sans-serif; fill: #fff; stroke: none; text-anchor: middle; }
.files { display: grid; grid-template-columns: repeat(7, 75px); grid-auto-rows: 75px; padding-top: 2px; overflow: hidden; background: #d6d3ce; }
.files.local { height: 181px; flex: none; border-top: 2px solid #424142; border-left: 1px solid #424142; border-bottom: 1px solid #fff; }
.files .sel { background: #08246b; color: #fff; padding: 0 2px 2px; }
.remotebox { flex: 1; min-height: 0; display: flex; justify-content: space-between; border-top: 2px solid #424142; border-left: 1px solid #424142; border-bottom: 1px solid #fff; }
.remotebox .files { margin-left: -2px; }
.vbar { width: 16px; display: flex; align-items: flex-end; background: #eae9e6; }
.statusbar { display: flex; gap: 2px; height: 23px; flex: none; padding-top: 5px; align-items: stretch; }
.statusbar p { border: 1px solid #848284; border-right-color: #fff; border-bottom-color: #fff; width: 126px; line-height: 16px; white-space: nowrap; overflow: hidden; }
.statusbar p:first-child { width: 376px; }
.statusbar p:nth-child(3) { width: 55px; }
.statusbar svg { margin: 3px 0 0 4px; }

.win-view { left: 705px; right: 0; top: 56px; height: 521px; border-right: 0; padding-right: 0; }
.page { flex: 1; min-height: 0; padding: 0 0 0 14px; background: #fff; border-left: 1px solid #848284; font-size: 13px; line-height: 16px; font-feature-settings: normal; }
.hint { white-space: nowrap; }
.line { display: flex; align-items: center; white-space: nowrap; }
.line label { display: flex; align-items: center; gap: 4px; }
.line input[type="radio"] { appearance: none; width: 13px; height: 13px; margin: 0; border: 1px solid #555; border-radius: 50%; background: #fff; }
.line input[type="radio"]:checked { background: radial-gradient(circle, #333 2px, #fff 3px); }
.shop { margin: 58px 0 0 8px; gap: 18px; }
.find { margin: 35px 0 0 2px; height: 26px; }
.find label { margin-right: 18px; }
.find .lead { width: 71px; }
.find label + label { margin-right: 8px; }
.query { width: 155px; height: 22px; border: 1px solid #848684; }
.next { width: 65px; height: 26px; margin-left: 9px; background: #949694; color: #fff; }
.iestatus { height: 22px; flex: none; border-top: 2px solid #b0adb0; background: #e7e3e7; line-height: 20px; }
.xpbar { height: 30px; flex: none; display: flex; background: linear-gradient(#8a8c8a, #706d70 5px, #6b696b 24px, #5a595a); color: #fff; }
.xpstart { width: 97px; display: flex; align-items: center; gap: 9px; padding-left: 7px; font: italic 18px "Noto Sans CJK SC", sans-serif; border-radius: 0 10px 10px 0; background: linear-gradient(#777, #484848 8px, #555); border-right: 2px solid #333; }
.xpquick { display: flex; align-items: center; gap: 8px; padding-left: 11px; width: 101px; color: #aaa; }
.xpquick .lit { color: #eee; }
.xpquick span { font-size: 16px; padding-left: 4px; font-feature-settings: normal; }
.xptask { display: flex; align-items: center; gap: 4px; width: 158px; padding-left: 9px; margin: 3px 0 2px; background: #8e908e; }
.xptask.down { width: 160px; padding-left: 12px; background: #4a494a; }
.hbar { height: 17px; flex: none; display: flex; background: #ebe9e6; }
.hbar button, .hbar span { width: 16px; display: grid; place-items: center; background: #d6d3ce; border: 1px solid #fff; border-right-color: #424142; border-bottom-color: #424142; }

/* Floating speed meter */
.meter { position: absolute; right: 18px; bottom: 132px; display: flex; align-items: center; width: 105px; height: 48px; }
.ball { position: absolute; left: 0; top: 0; width: 48px; height: 48px; border-radius: 50%; border: 2px solid #e8f4ec; box-shadow: 0 1px 3px #444; background: linear-gradient(#4aa07e, #087048 38%, #3fce62 40%, #4cd968); color: #fff; font: 14px/42px "Liberation Sans", sans-serif; text-align: center; }
.speeds { margin-left: 30px; flex: 1; height: 38px; padding: 4px 8px 0 20px; border-radius: 0 19px 19px 0; background: linear-gradient(#fff, #e5e5e5); box-shadow: 0 1px 3px #555; font: 10px/15px "Noto Sans", sans-serif; font-feature-settings: normal; }
.speeds p { display: flex; justify-content: space-between; }
.speeds b { font-size: 13px; }

/* Remote machine's taskbar */
.taskbar2003 { position: relative; height: 29px; flex: none; display: flex; align-items: center; padding-right: 2px; background: #d6d3ce; border-top: 1px solid #fff; }
.start, .tasks button { display: flex; align-items: center; gap: 4px; height: 23px; border: 1px solid #fff; border-right: 2px solid #424142; border-bottom: 2px solid #424142; }
.start { width: 46px; margin-left: -12px; gap: 2px; }
.flower { width: 30px; height: 28px; margin-left: 15px; }
.quick { display: flex; gap: 7px; width: 108px; padding-left: 23px; align-items: center; }
.quick b { font-size: 16px; padding-left: 3px; font-feature-settings: normal; }
.tasks { display: flex; gap: 3px; margin-right: auto; }
.tasks button { width: 160px; padding: 0 3px; overflow: hidden; }
.tasks .down { background: #eeedeb; border: 2px solid #424142; border-right: 1px solid #fff; border-bottom: 1px solid #fff; }
.tray { display: flex; gap: 2px; align-items: center; width: 153px; height: 24px; padding-left: 2px; border: 1px solid #848284; border-right-color: #fff; border-bottom-color: #fff; }
.tray time { margin-left: 5px; }

.vscroll { display: flex; flex-direction: column; align-items: center; justify-content: space-between; padding: 7px 0; background: #f1f1f1; }
.hscroll { display: flex; align-items: center; padding: 0 20px 0 5px; background: #f1f1f1; gap: 24px; border-top: 1px solid #777; border-bottom: 2px solid #555; grid-column: 1 / -1; }
.thumb { display: grid; place-items: center; border: 1px solid #999; border-radius: 2px; }
.vscroll .thumb { width: 15px; flex: 1; margin: 67px 0 3px; background: linear-gradient(90deg, #f5f5f5, #dcdce0 50%, #bfc0c4); }
.hscroll .thumb { height: 14px; flex: 1; background: linear-gradient(#f5f5f5, #dcdce0 50%, #bfc0c4); }
.netpop { position: absolute; right: 4px; bottom: 0; display: flex; align-items: center; justify-content: space-between; width: 123px; height: 22px; padding: 0 8px; border-radius: 4px; background: #fcfcfc; box-shadow: 0 0 2px #666; font: 11px "Noto Sans", sans-serif; font-feature-settings: normal; z-index: 2; }
.netpop b { font-size: 14px; }

/* Host taskbar */
.taskbar7 {
  position: relative; height: 30px; flex: none; display: flex; color: #fff; border-top: 1px solid #4c565c;
  background:
    radial-gradient(ellipse 80px 12px at 600px 8px, #4a5763, transparent),
    radial-gradient(ellipse 80px 10px at 960px 4px, #414a52, transparent),
    radial-gradient(ellipse 100px 12px at 1060px 14px, #35414b, transparent),
    linear-gradient(90deg, #050709, #1c242b 160px, #12171c 330px, #222b34 560px, #101317 760px, #1b2026 900px, #20262c);
}
.orb { width: 38px; height: 38px; margin: -6px 0 0 8px; z-index: 3; }
.apps { display: flex; align-items: stretch; margin: 0 auto 1px 14px; gap: 4px; }
.apps button { width: 42px; display: grid; place-items: center; border: 1px solid #8f989e; border-radius: 2px; background: linear-gradient(160deg, #5c656c, #2b333a 50%, #171d22 52%, #2d353b); }
.apps .plain { border-color: transparent; background: none; }
.apps .multi { width: 38px; margin-right: 4px; box-shadow: 4px 0 0 -1px #20272d, 4px 0 #8f989e; }
.apps .stack { width: 34px; margin-right: 8px; box-shadow: 4px 0 0 -1px #20272d, 4px 0 #8f989e, 8px 0 0 -1px #20272d, 8px 0 #8f989e; }
.apps .lit { background: linear-gradient(160deg, #d8dadc, #999da1 50%, #74787c 52%, #b4b7ba); }
.tray7 { display: flex; align-items: center; gap: 8px; padding-right: 12px; font-feature-settings: normal; }
.tray7 time { margin-left: 12px; }
.peek { width: 15px; border: 1px solid #6d757b; background: linear-gradient(120deg, #555d63, #1c2227); }
```
